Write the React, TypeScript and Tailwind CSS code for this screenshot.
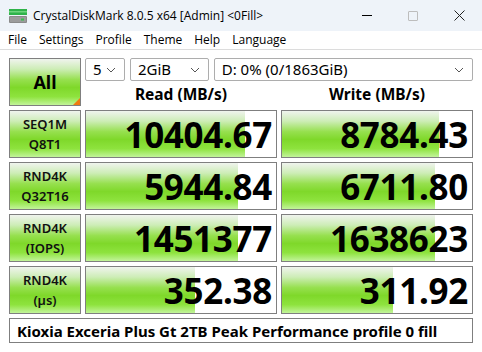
import React from "react";

const green =
  "bg-[linear-gradient(to_bottom,#f0f4ee_0%,#cdedb6_22%,#96e04e_45%,#7fd82a_62%,#8ee33e_82%,#c2f49a_100%)]";

const rows = [
  { l1: "SEQ1M", l2: "Q8T1", read: "10404.67", rw: 159, write: "8784.43", ww: 157 },
  { l1: "RND4K", l2: "Q32T16", read: "5944.84", rw: 152, write: "6711.80", ww: 153 },
  { l1: "RND4K", l2: "(IOPS)", read: "1451377", rw: 152, write: "1638623", ww: 153 },
  { l1: "RND4K", l2: "(µs)", read: "352.38", rw: 109, write: "311.92", ww: 111 },
];

function Chevron() {
  return (
    <svg width="10" height="6" viewBox="0 0 10 6" className="shrink-0">
      <path d="M1 1 L5 5 L9 1" fill="none" stroke="#555" strokeWidth="1" />
    </svg>
  );
}

function Combo({ w, text }: { w: string; text: string }) {
  return (
    <div className={`${w} h-[23px] flex items-center justify-between pl-[7px] pr-[8px] bg-white border border-[#adadad] rounded-[2px] text-[15px] text-black`}>
      <span className="leading-none">{text}</span>
      <Chevron />
    </div>
  );
}

function ValueBox({ value, width }: { value: string; width: number }) {
  return (
    <div className="relative h-[48px] border border-[#7f7f7f] bg-white overflow-hidden">
      <div className={`absolute left-0 top-0 bottom-0 ${green}`} style={{ width }} />
      <div className="relative h-full flex items-center justify-end pr-[4px] text-[35px] font-bold leading-none text-black tracking-[-0.3px]">
        {value}
      </div>
    </div>
  );
}

export default function App() {
  return (
    <div className="w-[482px] h-[352px] bg-white overflow-hidden font-['Noto_Sans',sans-serif] text-black">
      <div className="h-[31px] bg-[#eef3f9] flex items-center">
        <svg width="18" height="16" viewBox="0 0 18 16" className="ml-[9px] mr-[6px]">
          <rect x="0" y="1" width="18" height="6" fill="#2fb34a" />
          <rect x="0" y="3" width="18" height="1.5" fill="#6fd47e" />
          <rect x="0" y="8" width="18" height="7" rx="1" fill="#8a8a8a" />
          <rect x="1" y="9" width="16" height="5" fill="#9c9c9c" />
          <rect x="12" y="10.5" width="3" height="2" fill="#37c24f" />
        </svg>
        <span className="text-[12px] font-['Open_Sans',sans-serif]">CrystalDiskMark 8.0.5 x64 [Admin] &lt;0Fill&gt;</span>
        <div className="ml-auto flex items-center h-full">
          <div className="w-[46px] flex justify-center">
            <div className="w-[10px] h-px bg-black" />
          </div>
          <div className="w-[46px] flex justify-center">
            <div className="w-[10px] h-[10px] border border-[#bdbdbd] rounded-[1px]" />
          </div>
          <div className="w-[46px] flex justify-center">
            <svg width="11" height="11" viewBox="0 0 11 11">
              <path d="M0.5 0.5 L10.5 10.5 M10.5 0.5 L0.5 10.5" stroke="#222" strokeWidth="1" />
            </svg>
          </div>
        </div>
      </div>
      <div className="h-[19px] flex items-center gap-[12px] pl-[8px] text-[12px] font-['Open_Sans',sans-serif] border-b border-[#dcdcdc]">
        <span>File</span>
        <span>Settings</span>
        <span>Profile</span>
        <span>Theme</span>
        <span>Help</span>
        <span>Language</span>
      </div>
      <div className="pt-[8px] pl-[9px]">
        <div className="grid grid-cols-[72px_192px_192px] gap-x-1 gap-y-1">
          <div className={`relative h-[48px] border border-[#7f7f7f] ${green} flex items-center justify-center text-[18px] font-bold`}>
            All
            <div className="absolute right-0 bottom-0 w-0 h-0 border-l-[7px] border-l-transparent border-b-[7px] border-b-[#f07a10]" />
          </div>
          <div className="col-span-2 flex flex-col">
            <div className="flex gap-[5px]">
              <Combo w="w-[40px]" text="5" />
              <Combo w="w-[79px]" text="2GiB" />
              <Combo w="w-[260px]" text="D: 0% (0/1863GiB)" />
            </div>
            <div className="flex-1 grid grid-cols-[192px_192px] gap-x-1 items-center text-[15.5px] font-bold">
              <div className="text-center pt-[2px]">Read (MB/s)</div>
              <div className="text-center pt-[2px]">Write (MB/s)</div>
            </div>
          </div>
          {rows.map((r, i) => (
            <React.Fragment key={i}>
              <div className={`h-[48px] border border-[#7f7f7f] ${green} flex flex-col items-center justify-center text-[13px] font-semibold leading-[20px] text-[#111]`}>
                <span>{r.l1}</span>
                <span>{r.l2}</span>
              </div>
              <ValueBox value={r.read} width={r.rw} />
              <ValueBox value={r.write} width={r.ww} />
            </React.Fragment>
          ))}
          <div className="col-span-3 h-[25px] border border-[#7f7f7f] bg-white flex items-center pl-[7px] text-[15px] font-bold">
            Kioxia Exceria Plus Gt 2TB Peak Performance profile 0 fill
          </div>
        </div>
      </div>
    </div>
  );
}
